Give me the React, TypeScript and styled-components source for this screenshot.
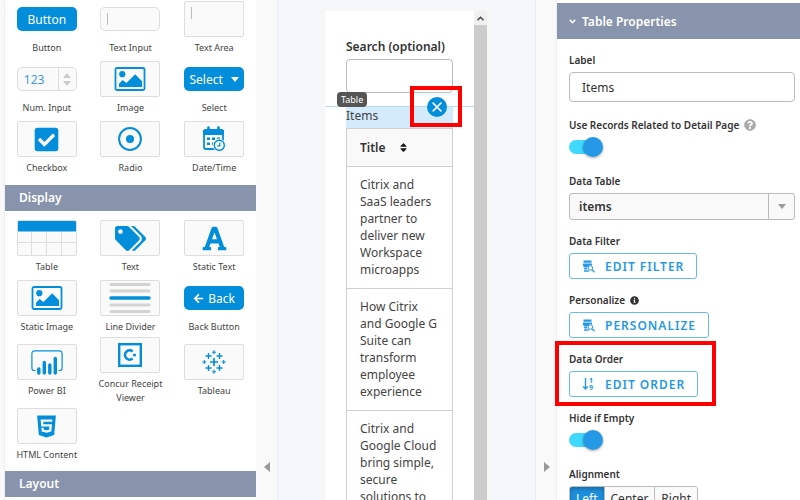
import React from 'react';
import styled, { createGlobalStyle, css } from 'styled-components';
import {
  FaArrowLeft,
  FaCheckSquare,
  FaFont,
  FaHtml5,
  FaInfoCircle,
  FaQuestionCircle,
  FaSort,
  FaTags,
} from 'react-icons/fa';

const BLUE = '#038edc';
const BRIGHT = '#2699e6';
const SLATE = '#8893ac';

const GlobalStyle = createGlobalStyle`
  *, *::before, *::after { box-sizing: border-box; }
  body {
    margin: 0;
    overflow: hidden;
    font-family: "Noto Sans", "Open Sans", sans-serif;
    font-size: 12px;
    color: #333;
    background: #f9f9f9;
  }
  button, input, select { font: inherit; color: inherit; margin: 0; }
  button { cursor: pointer; }
  svg { display: block; flex: none; }
`;

const Workspace = styled.div`
  display: grid;
  grid-template-columns: 5px 251px 21px minmax(240px, 1fr) 21px 243px;
  grid-template-rows: 100%;
  height: 100vh;
  overflow: hidden;
`;

const Gutter = styled.div`
  display: flex;
  flex-direction: column;
  justify-content: flex-end;
  align-items: center;
  padding-bottom: 28px;
  background: #f9f9f9;
`;

const CollapseButton = styled.button`
  border: 0;
  padding: 0;
  background: none;
  color: #999;
`;

/* ---------- Component palette ---------- */

const Palette = styled.aside`
  min-height: 0;
  background: #fff;
  box-shadow: 0 0 0 1px #eee;
`;

const PaletteScroll = styled.div`
  margin-top: -2px;
`;

const PaletteHeading = styled.h2`
  margin: 0;
  padding: 0 14px;
  line-height: 26px;
  font-size: 12px;
  font-weight: 600;
  color: #fff;
  background: ${SLATE};
`;

const PaletteGrid = styled.div<{ $first?: boolean }>`
  display: grid;
  grid-template-columns: repeat(3, 1fr);
  grid-auto-rows: minmax(60px, auto);
  padding: ${(p) => (p.$first ? '0 0 7px' : '6px 0')};
`;

const PaletteItem = styled.button`
  display: flex;
  flex-direction: column;
  align-items: center;
  justify-content: center;
  gap: 4px;
  border: 0;
  padding: 0 8px;
  background: none;
`;

const ItemLabel = styled.span`
  font-size: 9px;
  line-height: 14px;
  color: #444;
`;

const Slot = styled.span`
  display: flex;
  align-items: center;
  width: 60px;
  height: 36px;
`;

const Tile = styled.span`
  display: flex;
  align-items: center;
  justify-content: center;
  width: 60px;
  height: 36px;
  border: 1px solid #ddd;
  border-radius: 2px;
  background: #fafafa;
  color: ${BLUE};
  overflow: hidden;
`;

const Pill = styled.span`
  display: flex;
  flex: 1;
  align-items: center;
  justify-content: center;
  gap: 4px;
  height: 24px;
  border-radius: 5px;
  background: ${BLUE};
  color: #fff;
  font-size: 12px;
`;

const SelectPill = styled(Pill)`
  gap: 8px;
`;

const FieldSketch = styled.span`
  display: flex;
  flex: 1;
  align-items: center;
  height: 24px;
  border: 1px solid #ddd;
  border-radius: 5px;
  background: #fafafa;
`;

const AreaSketch = styled(Tile)`
  align-items: flex-start;
  justify-content: flex-start;
  padding-top: 5px;
`;

const Caret = styled.span`
  width: 1px;
  height: 12px;
  margin-left: 6px;
  background: #bbb;
`;

const SketchNumber = styled.span`
  flex: 1;
  text-align: left;
  padding-left: 6px;
  color: #3f97e0;
`;

const Stepper = styled.span`
  display: flex;
  align-items: center;
  justify-content: center;
  align-self: stretch;
  width: 18px;
  border-left: 1px solid #ddd;
`;

const PictureIcon = () => (
  <svg width="32" height="24" viewBox="0 0 32 24" fill={BLUE}>
    <rect x="1.5" y="1" width="29" height="22" rx="1.5" fill="none" stroke={BLUE} strokeWidth="1.8" />
    <circle cx="8.3" cy="7.2" r="3.1" />
    <path d="M5 20v-3.2l3.6-3.7 3.8 3 8.8-8.8 6.8 7V20z" />
  </svg>
);

const RadioIcon = () => (
  <svg width="24" height="24" viewBox="0 0 24 24">
    <circle cx="12" cy="12" r="10.9" fill="none" stroke={BLUE} strokeWidth="2" />
    <circle cx="12" cy="12" r="4" fill={BLUE} />
  </svg>
);

const CalendarIcon = () => (
  <svg width="24" height="26" viewBox="0 0 24 26">
    <rect x="2" y="4" width="19" height="19" rx="1.5" fill="none" stroke={BLUE} strokeWidth="1.8" />
    <path d="M1 4h21v5H1z" fill={BLUE} />
    <path d="M6.5 1.5v5M16.5 1.5v5" stroke={BLUE} strokeWidth="2.6" strokeLinecap="round" />
    <path d="M5 11.5h3v2.6H5zM10 11.5h3v2.6h-3zM15 11.5h3v2.6h-3zM5 16.5h3v2.6H5zM10 16.5h3v2.6h-3z" fill={BLUE} />
    <circle cx="17.3" cy="19.3" r="6.2" fill={BLUE} stroke="#fafafa" strokeWidth="1" />
    <circle cx="17.3" cy="19.3" r="4.3" fill="#fafafa" />
    <path d="M17.8 16.4v3.4h-2.6" fill="none" stroke={BLUE} strokeWidth="1.2" />
  </svg>
);

const TableIcon = () => (
  <svg width="58" height="34" viewBox="0 0 58 34">
    <path d="M0 0h58v10.5H0z" fill={BLUE} />
    <path d="M13.5 11v23M28.5 11v23M43.5 11v23M0 21.5h58" stroke="#ddd" />
  </svg>
);

const DividerIcon = () => (
  <svg width="42" height="32" viewBox="0 0 42 32" strokeWidth="3" strokeLinecap="round">
    <path d="M2 2.5h38M2 9h38M2 23h38M2 29.5h38" stroke="#d3d3d3" />
    <path d="M2 16h38" stroke={BLUE} strokeWidth="3.4" />
  </svg>
);

const PowerBiIcon = () => (
  <svg width="32" height="25" viewBox="0 0 32 25" fill="none" stroke={BLUE} strokeLinecap="round">
    <path d="M4 20.5H3.2A2.4 2.4 0 0 1 .9 18V3.4A2.5 2.5 0 0 1 3.4.9h25.2a2.5 2.5 0 0 1 2.5 2.5V18a2.4 2.4 0 0 1-2.4 2.5H28" strokeWidth="1.2" />
    <path d="M7.8 19v4M13.3 12.5V23M18.8 15v8M24.3 8.5V23" strokeWidth="3.4" />
  </svg>
);

const ConcurIcon = () => (
  <svg width="24" height="24" viewBox="0 0 24 24">
    <rect x="1.2" y="1.2" width="21.6" height="21.6" fill="none" stroke={BLUE} strokeWidth="2.4" />
    <path d="M14.6 8.5A4.6 4.6 0 1 0 14.6 15.5" fill="none" stroke={BLUE} strokeWidth="2.6" />
    <circle cx="16.5" cy="12" r="1.6" fill={BLUE} />
  </svg>
);

const TableauIcon = () => (
  <svg width="24" height="24" viewBox="0 0 24 24" stroke={BLUE} fill="none">
    <path d="M12 8v8M8 12h8" strokeWidth="1.7" />
    <path d="M6.500 3v6M3.500 6h6M17.500 3v6M14.500 6h6M6.500 15v6M3.500 18h6M17.500 15v6M14.500 18h6" strokeWidth="1.4" />
    <path d="M12 .3v4M10 2.3h4M12 19.7v4M10 21.7h4M2.3 10v4M.3 12h4M21.7 10v4M19.7 12h4" strokeWidth="1.1" />
  </svg>
);

const StepperIcon = () => (
  <svg width="8" height="13" viewBox="0 0 8 13" fill="#ccc">
    <path d="M4 0l4 5H0zM4 13l4-5H0z" />
  </svg>
);

const DownTriangle = ({ size = 8 }: { size?: number }) => (
  <svg width={size} height={size / 2 + 1} viewBox="0 0 8 5" fill="currentColor">
    <path d="M0 0h8L4 5z" />
  </svg>
);

type Entry = { label: string; art: React.ReactNode };

const tile = (art: React.ReactNode) => <Tile>{art}</Tile>;

const inputEntries: Entry[] = [
  { label: 'Button', art: <Slot><Pill>Button</Pill></Slot> },
  { label: 'Text Input', art: <Slot><FieldSketch><Caret /></FieldSketch></Slot> },
  { label: 'Text Area', art: <AreaSketch><Caret /></AreaSketch> },
  {
    label: 'Num. Input',
    art: (
      <Slot>
        <FieldSketch>
          <SketchNumber>123</SketchNumber>
          <Stepper><StepperIcon /></Stepper>
        </FieldSketch>
      </Slot>
    ),
  },
  { label: 'Image', art: tile(<PictureIcon />) },
  { label: 'Select', art: <Slot><SelectPill>Select<DownTriangle /></SelectPill></Slot> },
  { label: 'Checkbox', art: tile(<FaCheckSquare size={27} />) },
  { label: 'Radio', art: tile(<RadioIcon />) },
  { label: 'Date/Time', art: tile(<CalendarIcon />) },
];

const displayEntries: Entry[] = [
  { label: 'Table', art: tile(<TableIcon />) },
  { label: 'Text', art: tile(<FaTags size={31} />) },
  { label: 'Static Text', art: tile(<FaFont size={27} />) },
  { label: 'Static Image', art: tile(<PictureIcon />) },
  { label: 'Line Divider', art: tile(<DividerIcon />) },
  { label: 'Back Button', art: <Slot><Pill><FaArrowLeft size={11} />Back</Pill></Slot> },
  { label: 'Power BI', art: tile(<PowerBiIcon />) },
  { label: 'Concur Receipt Viewer', art: tile(<ConcurIcon />) },
  { label: 'Tableau', art: tile(<TableauIcon />) },
  { label: 'HTML Content', art: tile(<FaHtml5 size={25} />) },
];

const PaletteGroup = ({ entries, first }: { entries: Entry[]; first?: boolean }) => (
  <PaletteGrid $first={first}>
    {entries.map((entry) => (
      <PaletteItem key={entry.label} type="button">
        {entry.art}
        <ItemLabel>{entry.label}</ItemLabel>
      </PaletteItem>
    ))}
  </PaletteGrid>
);

/* ---------- Page preview ---------- */

const Canvas = styled.main`
  display: flex;
  min-height: 0;
  padding: 7px 44px 0 43px;
  background: #f4f8fc;
  border: solid #e9edf0;
  border-width: 0 1px;
`;

const Device = styled.div`
  display: flex;
  flex: 1;
  min-width: 0;
  border: solid #f7f7f7;
  border-width: 4px 4px 0;
  background: #fff;
`;

const PageContent = styled.div`
  flex: 1;
  min-width: 0;
  padding-top: 28px;
`;

const SearchField = styled.div`
  display: flex;
  flex-direction: column;
  gap: 4px;
  padding: 0 21px;
`;

const PreviewLabel = styled.label`
  line-height: 16px;
  font-weight: 600;
  white-space: nowrap;
`;

const SearchInput = styled.input`
  width: 100%;
  height: 34px;
  padding: 0 8px;
  border: 1px solid #bbb;
  border-radius: 4px;
  background: #fff;
`;

const SelectedBlock = styled.section`
  position: relative;
  margin-top: 13px;
  padding: 0 21px;
  border-top: 1px solid #b5deee;
`;

const TypeTag = styled.span`
  position: absolute;
  left: 12px;
  bottom: 100%;
  padding: 0 4px;
  border-radius: 4px;
  background: #555;
  color: #fff;
  font-size: 9px;
  line-height: 15px;
`;

const highlight = css`
  border: 4px solid #f00;
  pointer-events: none;
  content: '';
  position: absolute;
`;

const RemoveAnchor = styled.span`
  position: absolute;
  top: -10px;
  right: 27px;
  &::after {
    ${highlight}
    inset: -11px -15px -10px -17px;
  }
`;

const RemoveButton = styled.button`
  display: flex;
  align-items: center;
  justify-content: center;
  width: 20px;
  height: 20px;
  border: 0;
  padding: 0;
  border-radius: 50%;
  background: ${BLUE};
`;

const RecordTable = styled.table`
  width: 100%;
  border-collapse: collapse;
  line-height: 17px;
  color: #444;

  caption {
    height: 21px;
    text-align: left;
    background: #d3ebfb;
  }
  th, td {
    border: 1px solid #d0d0d0;
    text-align: left;
    vertical-align: top;
  }
  th {
    padding: 10px 13px;
    font-weight: 600;
    color: #333;
    background: #f9f9f9;
  }
  td { padding: 9px 13px 10px; }
`;

const SortButton = styled.button`
  display: flex;
  align-items: center;
  gap: 12px;
  border: 0;
  padding: 0;
  background: none;
  font-weight: 600;
  line-height: 17px;
`;

const ScrollRail = styled.div`
  display: flex;
  flex-direction: column;
  width: 13px;
  background: #ccc;
`;

const ScrollUp = styled.button`
  display: flex;
  align-items: center;
  justify-content: center;
  height: 14px;
  border: 0;
  padding: 0;
  background: #f0f0f0;
`;

const records = [
  'Citrix and SaaS leaders partner to deliver new Workspace microapps',
  'How Citrix and Google G Suite can transform employee experience',
  'Citrix and Google Cloud bring simple, secure solutions to',
];

/* ---------- Property panel ---------- */

const Panel = styled.aside`
  padding-top: 3px;
  background: #fff;
  box-shadow: 0 0 0 1px #eee;
`;

const PanelHeading = styled.button`
  display: flex;
  align-items: center;
  gap: 6px;
  width: 100%;
  height: 36px;
  border: 0;
  padding: 0 12px;
  background: ${SLATE};
  color: #fff;
  font-weight: 600;
`;

const Fields = styled.div`
  display: flex;
  flex-direction: column;
  align-items: stretch;
  gap: 13px;
  padding: 13px 5px 0 12px;
`;

const Field = styled.div<{ $highlighted?: boolean }>`
  display: flex;
  flex-direction: column;
  align-items: flex-start;
  gap: 4px;
  ${(p) =>
    p.$highlighted &&
    css`
      align-self: flex-start;
      position: relative;
      &::after {
        ${highlight}
        inset: -10px -18px -9px -14px;
      }
    `}
`;

const FieldLabel = styled.label`
  display: flex;
  align-items: center;
  gap: 5px;
  font-size: 10px;
  line-height: 16px;
  font-weight: 600;
  white-space: nowrap;
`;

const TextBox = styled.input`
  width: 100%;
  height: 30px;
  margin-bottom: 2px;
  padding: 0 12px;
  border: 1px solid #bbb;
  border-radius: 4px;
  background: #fff;
`;

const ToggleBox = styled.input`
  appearance: none;
  display: flex;
  align-items: center;
  width: 34px;
  height: 23px;
  padding-bottom: 3px;
  cursor: pointer;
  &::before {
    content: '';
    width: 24px;
    height: 14px;
    border-radius: 7px 0 0 7px;
    background: #40d8ff;
  }
  &::after {
    content: '';
    flex: none;
    width: 20px;
    height: 20px;
    margin-left: -10px;
    border-radius: 50%;
    background: ${BRIGHT};
    box-shadow: 0 1px 3px rgba(0, 0, 0, 0.35);
  }
`;

const SelectShell = styled.div`
  display: grid;
  grid-template-columns: 1fr 26px;
  width: 100%;
  height: 27px;
  border: 1px solid #bbb;
  border-radius: 3px;
  background: #f9f9f9;
`;

const SelectBox = styled.select`
  grid-area: 1 / 1 / 2 / 3;
  appearance: none;
  border: 0;
  padding: 0 34px 0 9px;
  background: none;
  font-weight: 600;
`;

const SelectArrow = styled.span`
  grid-area: 1 / 2;
  display: flex;
  align-items: center;
  justify-content: center;
  border-left: 1px solid #bbb;
  color: #999;
  pointer-events: none;
`;

const ActionButton = styled.button`
  display: flex;
  align-items: center;
  gap: 10px;
  height: 26px;
  padding: 0 12px;
  border: 1px solid #6bb8ee;
  border-radius: 3px;
  background: #fff;
  color: ${BRIGHT};
  font-weight: 600;
  letter-spacing: 1px;
`;

const Segments = styled.div`
  display: flex;
  border: 1px solid #bbb;
  border-radius: 3px;
  overflow: hidden;
`;

const Segment = styled.button<{ $active?: boolean }>`
  height: 22px;
  border: 0;
  padding: 0 6px;
  background: ${(p) => (p.$active ? '#1c8fdc' : '#fafafa')};
  color: ${(p) => (p.$active ? '#fff' : '#333')};
  box-shadow: ${(p) => (p.$active ? 'inset 0 2px 4px rgba(0, 0, 0, 0.25)' : 'none')};
  & + & { border-left: 1px solid #bbb; }
`;

const DataSearchIcon = () => (
  <svg width="13" height="13" viewBox="0 0 13 13" fill={BRIGHT}>
    <path d="M1.5.5h8v2.3h-8zM1 3.5h9v2L8 5 6 7H2.2L1 6zM1.5 7.6h3.7v1.9H2.5zM2 10.2h4l1.5 1.5H2z" />
    <circle cx="8.3" cy="8" r="2.3" fill="#fff" stroke={BRIGHT} />
    <path d="M10 9.8l2.5 2.5" stroke={BRIGHT} strokeWidth="1.3" />
  </svg>
);

const NumericSortIcon = () => (
  <svg width="13" height="14" viewBox="0 0 13 14" fill={BRIGHT}>
    <path d="M3.500 1v10.500M1.200 9.500l2.300 2.500 2.300-2.500" fill="none" stroke={BRIGHT} strokeWidth="1.400" />
    <text x="7" y="6" fontSize="7" fontWeight="700" letterSpacing="0">1</text>
    <text x="7" y="13" fontSize="7" fontWeight="700" letterSpacing="0">9</text>
  </svg>
);

const Toggle = ({ id, label, help }: { id: string; label: string; help?: boolean }) => (
  <Field>
    <FieldLabel htmlFor={id}>
      {label}
      {help && <FaQuestionCircle size={12} color="#aaa" />}
    </FieldLabel>
    <ToggleBox id={id} type="checkbox" role="switch" defaultChecked />
  </Field>
);

export default function App() {
  return (
    <>
      <GlobalStyle />
      <Workspace>
        <div />
        <Palette>
          <PaletteScroll>
            <PaletteGroup entries={inputEntries} first />
            <PaletteHeading>Display</PaletteHeading>
            <PaletteGroup entries={displayEntries} />
            <PaletteHeading>Layout</PaletteHeading>
          </PaletteScroll>
        </Palette>
        <Gutter>
          <CollapseButton type="button" aria-label="Collapse components">
            <svg width="6" height="10" viewBox="0 0 6 10" fill="currentColor"><path d="M6 0v10L0 5z" /></svg>
          </CollapseButton>
        </Gutter>

        <Canvas>
          <Device>
            <PageContent>
              <SearchField>
                <PreviewLabel htmlFor="search">Search (optional)</PreviewLabel>
                <SearchInput id="search" type="text" />
              </SearchField>
              <SelectedBlock>
                <TypeTag>Table</TypeTag>
                <RecordTable>
                  <caption>Items</caption>
                  <thead>
                    <tr>
                      <th scope="col">
                        <SortButton type="button">Title<FaSort size={11} color="#111" /></SortButton>
                      </th>
                    </tr>
                  </thead>
                  <tbody>
                    {records.map((text) => (
                      <tr key={text}><td>{text}</td></tr>
                    ))}
                  </tbody>
                </RecordTable>
                <RemoveAnchor>
                  <RemoveButton type="button" aria-label="Remove table">
                    <svg width="10" height="10" viewBox="0 0 8 8" stroke="#fff" strokeWidth="1.2">
                      <path d="M.5.5l7 7M7.5.5l-7 7" />
                    </svg>
                  </RemoveButton>
                </RemoveAnchor>
              </SelectedBlock>
            </PageContent>
            <ScrollRail>
              <ScrollUp type="button" aria-label="Scroll up">
                <svg width="7" height="5" viewBox="0 0 7 5" fill="none" stroke="#444" strokeWidth="1.5">
                  <path d="M.5 4.300l3-3 3 3" />
                </svg>
              </ScrollUp>
            </ScrollRail>
          </Device>
        </Canvas>

        <Gutter>
          <CollapseButton type="button" aria-label="Collapse properties">
            <svg width="6" height="10" viewBox="0 0 6 10" fill="currentColor"><path d="M0 0v10l6-5z" /></svg>
          </CollapseButton>
        </Gutter>
        <Panel>
          <PanelHeading type="button">
            <svg width="7" height="5" viewBox="0 0 7 5" fill="none" stroke="#fff" strokeWidth="1.5">
              <path d="M.7.8l2.8 2.8L6.3.8" />
            </svg>
            Table Properties
          </PanelHeading>
          <Fields>
            <Field>
              <FieldLabel htmlFor="label">Label</FieldLabel>
              <TextBox id="label" type="text" defaultValue="Items" />
            </Field>
            <Toggle id="related" label="Use Records Related to Detail Page" help />
            <Field>
              <FieldLabel htmlFor="table">Data Table</FieldLabel>
              <SelectShell>
                <SelectBox id="table" defaultValue="items">
                  <option value="items">items</option>
                </SelectBox>
                <SelectArrow><DownTriangle /></SelectArrow>
              </SelectShell>
            </Field>
            <Field>
              <FieldLabel htmlFor="filter">Data Filter</FieldLabel>
              <ActionButton id="filter" type="button"><DataSearchIcon />EDIT FILTER</ActionButton>
            </Field>
            <Field>
              <FieldLabel htmlFor="personalize">Personalize<FaInfoCircle size={9} /></FieldLabel>
              <ActionButton id="personalize" type="button"><DataSearchIcon />PERSONALIZE</ActionButton>
            </Field>
            <Field $highlighted>
              <FieldLabel htmlFor="order">Data Order</FieldLabel>
              <ActionButton id="order" type="button"><NumericSortIcon />EDIT ORDER</ActionButton>
            </Field>
            <Toggle id="hide" label="Hide if Empty" />
            <Field>
              <FieldLabel as="span" id="alignment">Alignment</FieldLabel>
              <Segments role="group" aria-labelledby="alignment">
                <Segment type="button" $active aria-pressed="true">Left</Segment>
                <Segment type="button" aria-pressed="false">Center</Segment>
                <Segment type="button" aria-pressed="false">Right</Segment>
              </Segments>
            </Field>
          </Fields>
        </Panel>
      </Workspace>
    </>
  );
}
